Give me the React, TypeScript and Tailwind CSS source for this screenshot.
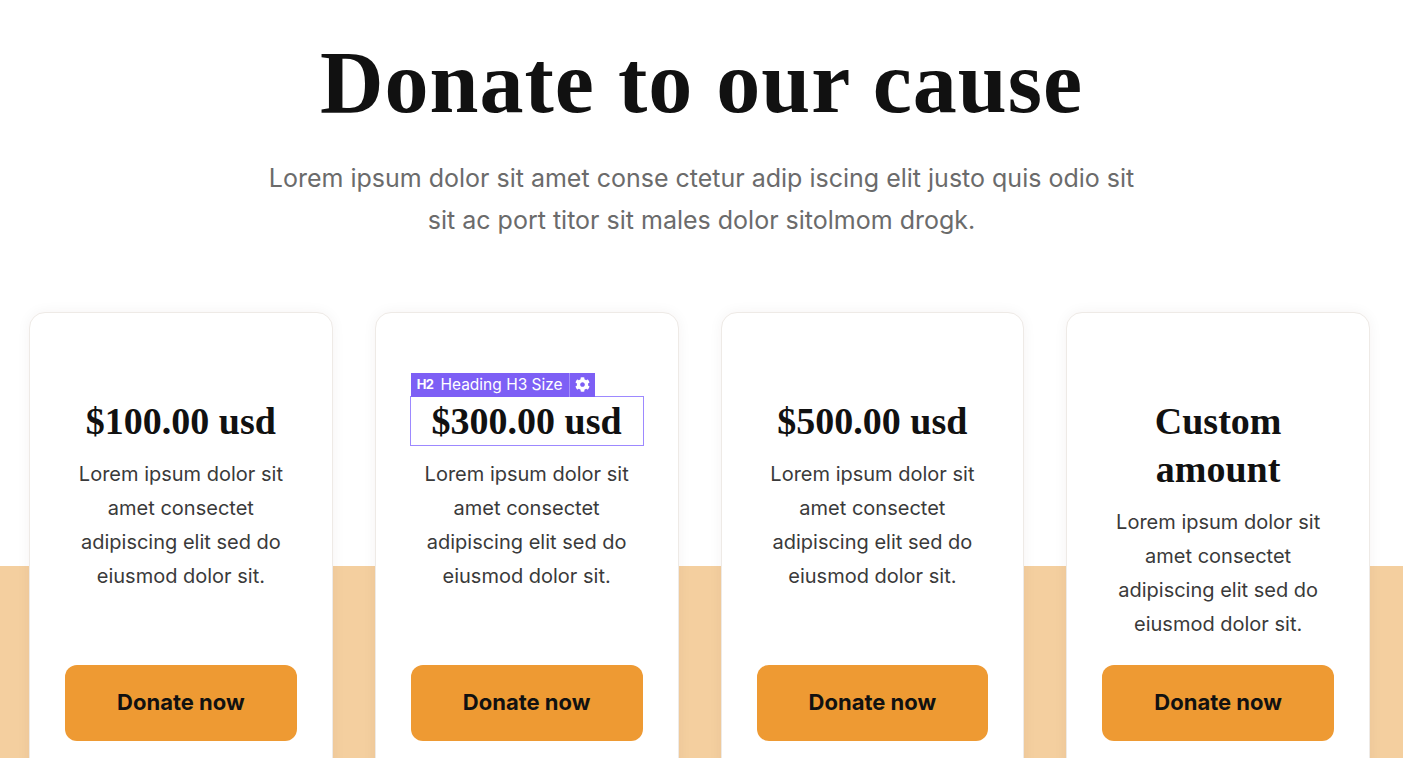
import { FaCog } from 'react-icons/fa'

const serif = { fontFamily: '"Liberation Serif", "Times New Roman", serif' }

interface Tier {
  title: string
  selected?: boolean
}

const tiers: Tier[] = [
  { title: '$100.00 usd' },
  { title: '$300.00 usd', selected: true },
  { title: '$500.00 usd' },
  { title: 'Custom amount' },
]

// overlay shown by the page editor on the selected heading
function EditorBadge() {
  return (
    <div className="absolute bottom-full left-0 flex h-6 items-stretch bg-[#7d5ff5] text-white font-['Inter',sans-serif]">
      <div className="flex items-center gap-[7px] pl-[6px] pr-[6px]">
        <span className="text-[13px] font-bold leading-none tracking-[-0.6px]">H2</span>
        <span className="text-[15.5px] leading-none">Heading H3 Size</span>
      </div>
      <div className="w-px bg-[#a591fb]" />
      <div className="flex items-center px-[5px]">
        <FaCog className="h-[15px] w-[15px]" />
      </div>
    </div>
  )
}

function DonationCard({ title, selected }: Tier) {
  return (
    <div className="flex flex-col rounded-2xl border border-[#eeeae6] bg-white px-[35px] pt-[84px] pb-[40px] text-center shadow-[0_0_14px_rgba(60,40,20,0.05)]">
      <div className="relative">
        {selected && <EditorBadge />}
        <h3
          style={serif}
          className={`text-[38px] font-bold leading-[48px] text-[#111] ${
            selected ? 'outline outline-[1.5px] outline-[#9d89ff]' : ''
          }`}
        >
          {title}
        </h3>
      </div>
      <p className="mt-3 mb-6 text-[20px] leading-[34px] text-[#3a3a3a] font-['Inter',sans-serif]">
        Lorem ipsum dolor sit amet consectet adipiscing elit sed do eiusmod dolor sit.
      </p>
      <button className="mt-auto h-[76px] w-full shrink-0 rounded-xl bg-[#ee9a33] text-[22px] font-bold text-[#111] font-['Inter',sans-serif]">
        Donate now
      </button>
    </div>
  )
}

export default function App() {
  return (
    <div className="min-h-screen bg-white pt-[35px]">
      <h1 style={serif} className="text-center text-[88px] font-bold leading-[1.1] tracking-[1px] text-[#111]">
        Donate to our cause
      </h1>
      <p className="mx-auto mt-[25px] max-w-[880px] text-center text-[25px] leading-[42px] text-[#6b6b6b] font-['Inter',sans-serif]">
        Lorem ipsum dolor sit amet conse ctetur adip iscing elit justo quis odio sit sit ac port titor sit males dolor sitolmom drogk.
      </p>
      <section className="mt-[71px] bg-[linear-gradient(to_bottom,#ffffff_254px,#f4cf9f_254px)] pl-[29px] pr-[33px]">
        <div className="grid grid-cols-4 gap-[42px]">
          {tiers.map((t) => (
            <DonationCard key={t.title} {...t} />
          ))}
        </div>
      </section>
    </div>
  )
}
